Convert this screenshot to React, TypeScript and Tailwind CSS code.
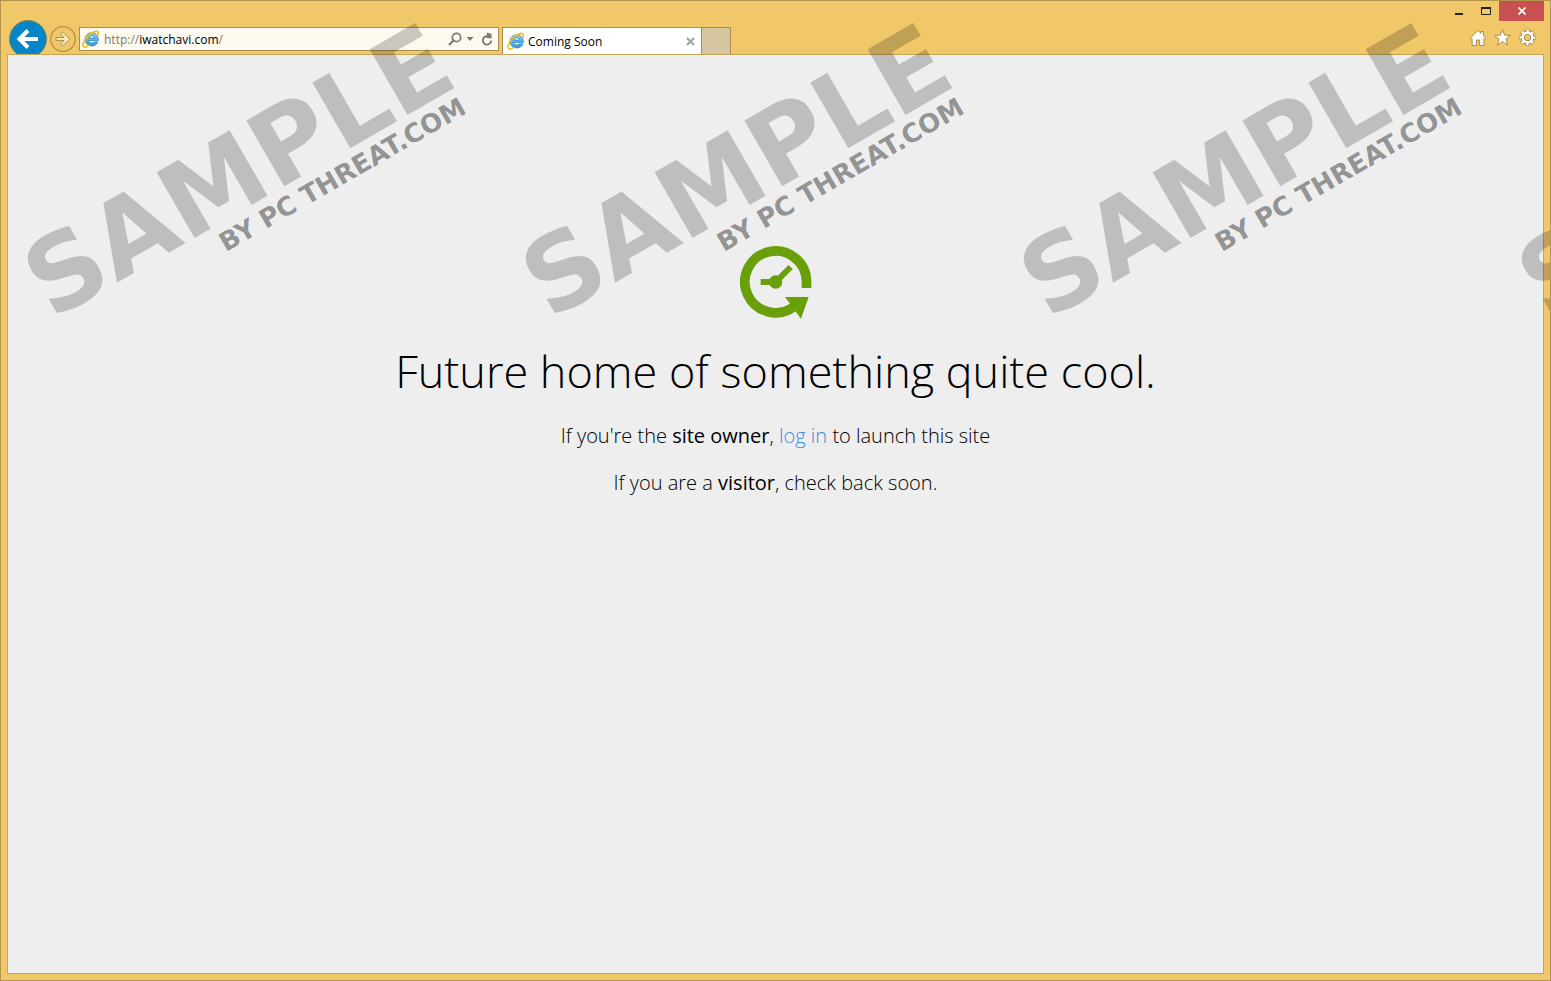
import React from "react";

const STAMPS = [0, 1, 2, 3];

function IeLogo() {
  return (
    <svg width="18" height="18" viewBox="0 0 54 54" aria-hidden="true" className="shrink-0">
      <defs>
        <linearGradient id="ieBlue" x1="0" y1="0" x2="0" y2="1">
          <stop offset="0" stopColor="#7fd0f5" />
          <stop offset="1" stopColor="#3399da" />
        </linearGradient>
      </defs>
      <path
        d="M29 8C18 8 9 17 9 28s9 20 20 20c9 0 16-5 19-12H36c-2 2-4 3-7 3-4 0-7-3-8-7h28c1-14-8-24-20-24Zm-8 16c1-5 4-7 8-7s7 2 8 7Z"
        fill="url(#ieBlue)"
        stroke="#2679b8"
        strokeWidth="2"
      />
      <path
        d="M48 15C51 7 47 2 38 5 28 8 15 19 8 31 2 42 1 50 7 51c4 1 9-2 13-5"
        fill="none"
        stroke="#f4bc1c"
        strokeWidth="5"
        strokeLinecap="round"
      />
    </svg>
  );
}

function SpeedMark() {
  return (
    <svg width="72" height="73" viewBox="44 33 216 219" aria-hidden="true">
      <path d="M243.500 159V140.500A92.500 92.500 0 1 0 206 215" fill="none" stroke="#699f09" strokeWidth="29" />
      <path d="M179 186H250L227 251Z" fill="#699f09" />
      <circle cx="151" cy="141" r="20" fill="#699f09" />
      <path d="M106 141H151L196 96" fill="none" stroke="#699f09" strokeWidth="18" />
    </svg>
  );
}

function NavButtons() {
  return (
    <div className="flex h-[34px] w-[71px] shrink-0 gap-[3px] overflow-hidden pl-px">
      <button type="button" aria-label="Back" className="size-[38px] shrink-0">
        <svg width="38" height="38" viewBox="0 0 38 38" aria-hidden="true">
          <circle cx="19" cy="19" r="18.500" fill="#0486c8" stroke="#8a8350" />
          <path d="M29 19H11M19 10.500L10.500 19L19 27.500" fill="none" stroke="#fff" strokeWidth="4" />
        </svg>
      </button>
      <button type="button" aria-label="Forward" className="mt-[6px] size-[26px] shrink-0">
        <svg width="26" height="26" viewBox="0 0 26 26" aria-hidden="true">
          <circle cx="13" cy="13" r="12.300" fill="none" stroke="#b1924b" strokeWidth="1.300" />
          <path d="M6 11.500H14L10.500 8L12.500 6L20 13L12.500 20L10.500 18L14 14.500H6Z" fill="#fbe9bd" stroke="#b1924b" />
        </svg>
      </button>
    </div>
  );
}

function AddressBar() {
  return (
    <div className="mt-[7px] flex h-6 w-[420px] items-center border border-[#a98d4b] bg-[#fef9ee] pr-[5px] pl-[2px]">
      <IeLogo />
      <div className="ml-1 flex-1 pt-[2px] text-xs leading-4 text-black">
        <span className="text-[#7d7b76]">http://</span>iwatchavi.com<span className="text-[#7d7b76]">/</span>
      </div>
      <button type="button" aria-label="Search" className="mr-1">
        <svg width="14" height="14" viewBox="0 0 14 14" aria-hidden="true" fill="none" stroke="#7b7973">
          <circle cx="8.500" cy="5.500" r="4.200" strokeWidth="1.700" />
          <path d="M5.500 8.500L1 13" strokeWidth="2.200" />
        </svg>
      </button>
      <button type="button" aria-label="Show address list" className="mr-[7px]">
        <svg width="8" height="4" viewBox="0 0 8 4" aria-hidden="true">
          <path d="M0.500 0H7.500L4 4Z" fill="#7b7973" />
        </svg>
      </button>
      <button type="button" aria-label="Refresh">
        <svg width="12" height="14" viewBox="0 0 12 14" aria-hidden="true">
          <path d="M10.200 8.500A4.200 4.200 0 1 1 7.500 4.500" fill="none" stroke="#7b7973" strokeWidth="1.900" />
          <path d="M6 0.500L10.500 2V6.500L5.500 6Z" fill="#7b7973" />
        </svg>
      </button>
    </div>
  );
}

function Tabs() {
  return (
    <div className="mt-[7px] ml-[3px] flex h-[27px]">
      <div className="flex w-[200px] items-center border border-b-0 border-[#a98d4b] bg-white pr-[6px] pl-1">
        <IeLogo />
        <span className="ml-[3px] flex-1 pt-[2px] text-xs leading-4 text-black">Coming Soon</span>
        <button type="button" aria-label="Close tab">
          <svg width="9" height="9" viewBox="0 0 9 9" aria-hidden="true">
            <path d="M1 1L8 8M8 1L1 8" stroke="#a0a0a0" strokeWidth="2" />
          </svg>
        </button>
      </div>
      <button type="button" aria-label="New tab" className="w-[29px] border border-b-0 border-l-0 border-[#a98d4b] bg-[#d5c5a0]" />
    </div>
  );
}

function WindowControls() {
  return (
    <div className="flex h-5 justify-end">
      <button type="button" aria-label="Minimize" className="flex w-[27px] justify-center">
        <svg width="10" height="20" viewBox="0 0 10 20" aria-hidden="true">
          <path d="M1 13H9" stroke="#222" strokeWidth="2" />
        </svg>
      </button>
      <button type="button" aria-label="Maximize" className="flex w-[27px] justify-center">
        <svg width="10" height="20" viewBox="0 0 10 20" aria-hidden="true">
          <path d="M0.500 7V13.500H9.500V7" fill="none" stroke="#222" />
          <path d="M0 7H10" stroke="#222" strokeWidth="2" />
        </svg>
      </button>
      <button type="button" aria-label="Close" className="flex w-[45px] items-center justify-center bg-[#c75050]">
        <svg width="8" height="8" viewBox="0 0 8 8" aria-hidden="true">
          <path d="M0.500 0.500L7.500 7.500M7.500 0.500L0.500 7.500" stroke="#fff" strokeWidth="1.700" />
        </svg>
      </button>
    </div>
  );
}

function Tools() {
  return (
    <div className="flex items-center justify-end gap-2 pt-2 pr-2">
      <button type="button" aria-label="Home">
        <svg width="16" height="16" viewBox="0 0 16 16" aria-hidden="true">
          <path
            d="M8 0.500L11 3.400V1.500H13.400V5.500L16 8.200L14.800 9.500L13.900 8.700V15.500H9.600V10H6.400V15.500H2.100V8.700L1.200 9.500L0 8.200Z"
            fill="#fff"
            stroke="#9c8040"
            strokeWidth="0.900"
          />
        </svg>
      </button>
      <button type="button" aria-label="Favorites">
        <svg width="17" height="17" viewBox="0 0 18 17" aria-hidden="true">
          <path d="M9 0.400L11.300 6L17.500 6.200L12.700 10.200L14.400 16.500L9 12.900L3.600 16.500L5.300 10.200L0.500 6.200L6.700 6Z" fill="#fff" stroke="#9c8040" strokeWidth="0.900" />
        </svg>
      </button>
      <button type="button" aria-label="Tools">
        <svg width="17" height="17" viewBox="0 0 16 16" aria-hidden="true" fill="none">
          <circle cx="8" cy="8" r="6.500" stroke="#9c8040" strokeWidth="3" strokeDasharray="3.400 1.705" strokeDashoffset="1.700" />
          <circle cx="8" cy="8" r="4.500" stroke="#9c8040" strokeWidth="3.800" />
          <circle cx="8" cy="8" r="6.400" stroke="#fff" strokeWidth="2.200" strokeDasharray="2.200 2.827" strokeDashoffset="1.100" />
          <circle cx="8" cy="8" r="4.500" stroke="#fff" strokeWidth="2.200" />
        </svg>
      </button>
    </div>
  );
}

function Watermark() {
  return (
    <div className="pointer-events-none absolute inset-0 flex overflow-hidden pt-[229px] pl-[44px] font-['DejaVu_Sans',sans-serif] leading-none font-bold whitespace-nowrap">
      {STAMPS.map((n) => (
        <div key={n} className="w-[498px] shrink-0">
          <div className="flex h-[126px] w-[479px] origin-[0_92px] -rotate-30 flex-col items-end pt-4">
            <div className="text-[104px] leading-[84px] text-black/20">SAMPLE</div>
            <div className="pr-2 text-[26px] text-black/40">BY PC THREAT.COM</div>
          </div>
        </div>
      ))}
    </div>
  );
}

export default function App() {
  return (
    <div className="relative flex min-h-screen flex-col border border-[#b3944c] bg-[#f0c869] px-[6px] pb-[6px] font-['Open_Sans',sans-serif]">
      <header className="flex h-[53px] items-start justify-between">
        <div className="flex pt-[19px] pl-px">
          <NavButtons />
          <AddressBar />
          <Tabs />
        </div>
        <div className="flex flex-col">
          <WindowControls />
          <Tools />
        </div>
      </header>
      <main className="flex flex-1 flex-col items-center border border-[#c5a659] bg-[#eeeeee] pt-[191px] text-center font-light text-black">
        <SpeedMark />
        <h1 className="mt-5 text-[45px] leading-[64px]">Future home of something quite cool.</h1>
        <p className="mt-[19px] text-xl leading-7">
          If you&apos;re the <strong className="font-medium">site owner</strong>,{" "}
          <a href="#login" className="text-[#428be8]">
            log in
          </a>{" "}
          to launch this site
        </p>
        <p className="mt-[19px] text-xl leading-7">
          If you are a <strong className="font-medium">visitor</strong>, check back soon.
        </p>
      </main>
      <Watermark />
    </div>
  );
}
